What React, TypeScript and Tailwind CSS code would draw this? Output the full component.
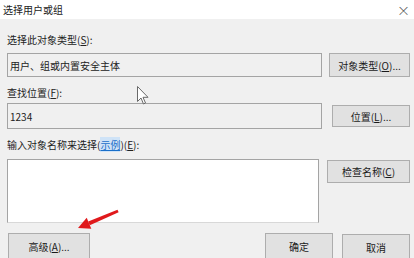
const font = "font-['Noto_Sans_CJK_SC','Noto_Sans',sans-serif]"

function Key({ k }: { k: string }) {
  return <span className="underline underline-offset-1">{k}</span>
}

function Btn({ children, className = "" }: { children: React.ReactNode; className?: string }) {
  return (
    <div
      className={`flex shrink-0 items-center justify-center border border-[#adadad] bg-[#e1e1e1] text-[10px] text-[#1a1a1a] ${className}`}
    >
      {children}
    </div>
  )
}

export default function App() {
  return (
    <div className={`relative h-[258px] w-[414px] overflow-hidden bg-[#f0f0f0] ${font}`}>
      {/* title bar */}
      <div className="flex h-[19px] items-center justify-between bg-white pl-[3px] pr-[4px] text-[10px] text-[#222]">
        <span>选择用户或组</span>
        <span className="text-[13px] font-light leading-none text-[#444]">×</span>
      </div>

      <div className="px-[7px] pr-[4px]">
        <div className="mt-[14px] h-[14px] text-[10px] leading-[14px] text-[#222]">
          选择此对象类型(<Key k="S" />):
        </div>
        <div className="mt-[6px] flex items-center">
          <div className="flex h-[24px] w-[315px] items-center border border-[#a4a4a4] bg-[#f0f0f0] pl-[2px] text-[10px] text-[#222]">
            用户、组或内置安全主体
          </div>
          <Btn className="ml-[7px] h-[24px] w-[81px]">
            对象类型(<Key k="O" />)...
          </Btn>
        </div>

        <div className="mt-[9px] h-[14px] text-[10px] leading-[14px] text-[#222]">
          查找位置(<Key k="F" />):
        </div>
        <div className="mt-[3px] flex items-center">
          <div className="flex h-[26px] w-[315px] items-center border border-[#a4a4a4] bg-[#f0f0f0] pl-[2px] text-[10px] text-[#222]">
            1234
          </div>
          <Btn className="ml-[10px] h-[22px] w-[78px]">
            位置(<Key k="L" />)...
          </Btn>
        </div>

        <div className="mt-[9px] h-[14px] text-[10px] leading-[14px] text-[#222]">
          输入对象名称来选择(
          <span className="bg-[#cfe3f7] text-[#1a6fc9] underline">示例</span>)(<Key k="E" />):
        </div>
        <div className="mt-[7px] flex items-start">
          <div className="h-[64px] w-[313px] border border-[#a4a4a4] border-b-[#d8d8d8] bg-white" />
          <Btn className="ml-[8px] mt-px h-[23px] w-[83px]">
            检查名称(<Key k="C" />)
          </Btn>
        </div>

        <div className="mt-[10px] flex items-start">
          <Btn className="ml-px h-[26px] w-[82px]">
            高级(<Key k="A" />)...
          </Btn>
          <div className="flex-1" />
          <Btn className="h-[26px] w-[68px]">确定</Btn>
          <Btn className="ml-[9px] mt-px h-[26px] w-[68px]">取消</Btn>
        </div>
      </div>

      {/* mouse cursor */}
      <svg className="absolute left-[137px] top-[86px]" width="13" height="20" viewBox="0 0 13 20">
        <path
          d="M0.5 0.5 L0.5 15.5 L4 12 L6.5 18 L8.5 17 L6 11.3 L11 11.3 Z"
          fill="#ffffff"
          stroke="#6a6a6a"
          strokeWidth="1"
        />
      </svg>

      {/* red arrow */}
      <svg className="absolute left-[70px] top-[205px]" width="55" height="28" viewBox="0 0 55 28">
        <polygon points="47.5,4.8 48.6,7.2 19.8,20.2 18.2,16.4" fill="#e0191c" />
        <polygon points="8,23 16.7,12.8 21.3,23.8" fill="#e0191c" />
      </svg>
    </div>
  )
}
